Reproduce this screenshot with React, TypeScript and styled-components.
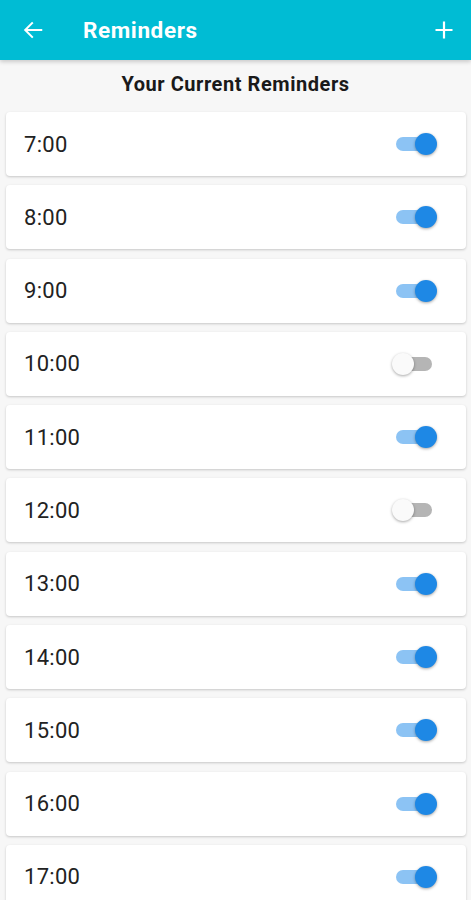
import React, { useState } from "react";
import styled, { createGlobalStyle } from "styled-components";

const Global = createGlobalStyle`
  html, body { margin: 0; padding: 0; background: #f7f7f7; }
  body { font-family: Roboto, "Noto Sans", sans-serif; overflow: hidden; }
  * { box-sizing: border-box; }
`;

const Page = styled.div`
  width: 471px;
  height: 900px;
  overflow: hidden;
  background: #f7f7f7;
  display: flex;
  flex-direction: column;
`;

const Header = styled.header`
  height: 60px;
  flex: none;
  background: #00bcd4;
  display: flex;
  align-items: center;
  padding: 0 14px 0 20px;
  box-shadow: 0 2px 4px rgba(0, 0, 0, 0.18);
  position: relative;
  z-index: 1;
`;

const IconButton = styled.button`
  width: 26px;
  height: 26px;
  padding: 0;
  border: 0;
  background: transparent;
  display: flex;
  align-items: center;
  justify-content: center;
  color: #fff;
`;

const Title = styled.h1`
  margin: 0 0 0 37px;
  flex: 1;
  color: #fff;
  font-size: 22.5px;
  font-weight: 700;
  letter-spacing: 0.6px;
`;

const SubTitle = styled.h2`
  margin: 12px 0 0;
  text-align: center;
  font-size: 20px;
  font-weight: 700;
  color: #1a1a1a;
  line-height: 24px;
  letter-spacing: 0.55px;
`;

const List = styled.div`
  display: flex;
  flex-direction: column;
  gap: 11.3px;
  padding: 16px 5px 0 6px;
`;

const Card = styled.div`
  height: 64px;
  flex: none;
  background: #fff;
  border-radius: 4px;
  box-shadow: 0 1px 2.5px rgba(0, 0, 0, 0.2);
  display: flex;
  align-items: center;
  justify-content: space-between;
  padding: 0 34px 0 18px;
  margin-bottom: -2px;
`;

const Time = styled.span`
  font-size: 22px;
  color: #222;
  letter-spacing: 0.3px;
`;

const Track = styled.button<{ $on: boolean }>`
  position: relative;
  width: 36px;
  height: 14px;
  border: 0;
  padding: 0;
  border-radius: 7px;
  background: ${(p) => (p.$on ? "#8cc3f4" : "#b5b5b5")};
  cursor: pointer;
`;

const Thumb = styled.span<{ $on: boolean }>`
  position: absolute;
  top: -4px;
  left: ${(p) => (p.$on ? "19px" : "-4px")};
  width: 22px;
  height: 22px;
  border-radius: 50%;
  background: ${(p) => (p.$on ? "#1e88e5" : "#fafafa")};
  box-shadow: 0 1px 3px rgba(0, 0, 0, 0.35);
`;

const initial: [string, boolean][] = [
  ["7:00", true],
  ["8:00", true],
  ["9:00", true],
  ["10:00", false],
  ["11:00", true],
  ["12:00", false],
  ["13:00", true],
  ["14:00", true],
  ["15:00", true],
  ["16:00", true],
  ["17:00", true],
];

export default function App() {
  const [items, setItems] = useState(initial);
  return (
    <Page>
      <Global />
      <Header>
        <IconButton aria-label="back">
          <svg width="22" height="22" viewBox="0 0 24 24" fill="none" stroke="#fff" strokeWidth="2.2" strokeLinecap="square">
            <path d="M21 12H4M11 4.5L3.5 12L11 19.5" />
          </svg>
        </IconButton>
        <Title>Reminders</Title>
        <IconButton aria-label="add">
          <svg width="20" height="20" viewBox="0 0 20 20" fill="none" stroke="#fff" strokeWidth="2.2">
            <path d="M10 1.5V18.5M1.5 10H18.5" />
          </svg>
        </IconButton>
      </Header>
      <SubTitle>Your Current Reminders</SubTitle>
      <List>
        {items.map(([t, on], i) => (
          <Card key={t}>
            <Time>{t}</Time>
            <Track
              $on={on}
              onClick={() =>
                setItems(items.map((it, j) => (j === i ? [it[0], !it[1]] : it)))
              }
            >
              <Thumb $on={on} />
            </Track>
          </Card>
        ))}
      </List>
    </Page>
  );
}
